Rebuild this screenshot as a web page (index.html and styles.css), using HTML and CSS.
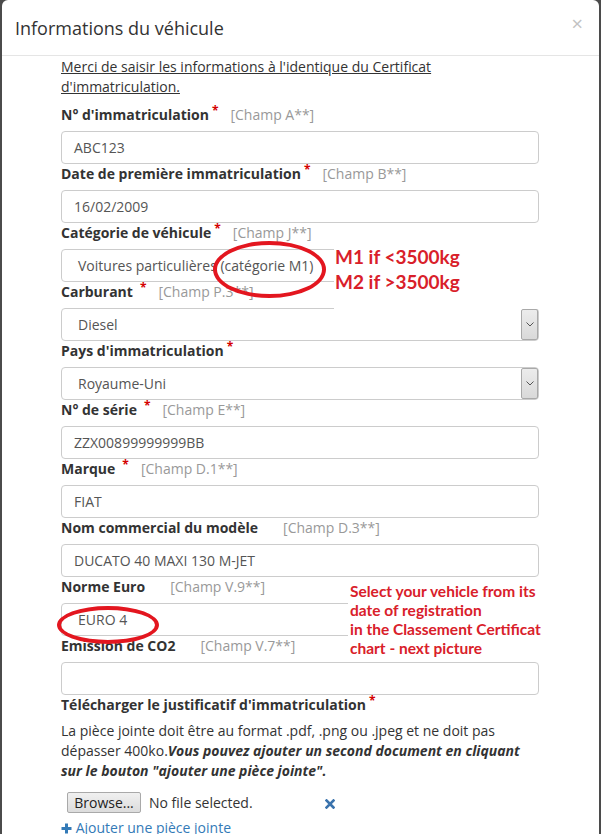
FILE: index.html
```html
<!DOCTYPE html>
<html lang="fr">
<head>
<meta charset="utf-8">
<title>Informations du véhicule</title>
<link rel="stylesheet" href="styles.css">
</head>
<body>
<div class="modal">
  <div class="modal-header">
    <h4 class="modal-title">Informations du véhicule</h4>
    <span class="close">×</span>
  </div>
  <div class="modal-body">
    <p class="intro">Merci de saisir les informations à l'identique du Certificat<br>d'immatriculation.</p>

    <div class="field">
      <div class="label"><b>N° d'immatriculation</b><span class="req">*</span><span class="champ">[Champ A**]</span></div>
      <div class="input">ABC123</div>
    </div>
    <div class="field">
      <div class="label"><b>Date de première immatriculation</b><span class="req">*</span><span class="champ">[Champ B**]</span></div>
      <div class="input">16/02/2009</div>
    </div>
    <div class="field">
      <div class="label"><b>Catégorie de véhicule</b><span class="req">*</span><span class="champ">[Champ J**]</span></div>
      <div class="select"><span class="select-value">Voitures particulières (catégorie M1)</span><span class="select-arrow"><svg width="8" height="5" viewBox="0 0 8 5"><path d="M0.5 0.5 L4 4 L7.5 0.5" fill="none" stroke="#555" stroke-width="1"/></svg></span></div>
    </div>
    <div class="field">
      <div class="label"><b>Carburant</b><span class="req req-spaced">*</span><span class="champ">[Champ P.3**]</span></div>
      <div class="select"><span class="select-value">Diesel</span><span class="select-arrow"><svg width="8" height="5" viewBox="0 0 8 5"><path d="M0.5 0.5 L4 4 L7.5 0.5" fill="none" stroke="#555" stroke-width="1"/></svg></span></div>
    </div>
    <div class="field">
      <div class="label"><b>Pays d'immatriculation</b><span class="req">*</span></div>
      <div class="select"><span class="select-value">Royaume-Uni</span><span class="select-arrow"><svg width="8" height="5" viewBox="0 0 8 5"><path d="M0.5 0.5 L4 4 L7.5 0.5" fill="none" stroke="#555" stroke-width="1"/></svg></span></div>
    </div>
    <div class="field">
      <div class="label"><b>N° de série</b><span class="req req-spaced">*</span><span class="champ">[Champ E**]</span></div>
      <div class="input">ZZX00899999999BB</div>
    </div>
    <div class="field">
      <div class="label"><b>Marque</b><span class="req req-spaced">*</span><span class="champ">[Champ D.1**]</span></div>
      <div class="input">FIAT</div>
    </div>
    <div class="field">
      <div class="label"><b>Nom commercial du modèle</b><span class="champ champ-solo">[Champ D.3**]</span></div>
      <div class="input">DUCATO 40 MAXI 130 M-JET</div>
    </div>
    <div class="field">
      <div class="label"><b>Norme Euro</b><span class="champ champ-solo">[Champ V.9**]</span></div>
      <div class="select"><span class="select-value">EURO 4</span><span class="select-arrow"><svg width="8" height="5" viewBox="0 0 8 5"><path d="M0.5 0.5 L4 4 L7.5 0.5" fill="none" stroke="#555" stroke-width="1"/></svg></span></div>
    </div>
    <div class="field">
      <div class="label"><b>Emission de CO2</b><span class="champ champ-solo">[Champ V.7**]</span></div>
      <div class="input"></div>
    </div>

    <div class="label"><b>Télécharger le justificatif d'immatriculation</b><span class="req">*</span></div>
    <p class="help">La pièce jointe doit être au format .pdf, .png ou .jpeg et ne doit pas<br>dépasser 400ko.<em>Vous pouvez ajouter un second document en cliquant<br>sur le bouton "ajouter une pièce jointe".</em></p>
    <div class="file-row">
      <span class="browse">Browse...</span>
      <span class="file-name">No file selected.</span>
      <svg class="remove" width="10" height="10" viewBox="0 0 10 10"><path d="M1.5 1.5 L8.5 8.5 M8.5 1.5 L1.5 8.5" stroke="#3b73ad" stroke-width="2.6" stroke-linecap="square"/></svg>
    </div>
    <div class="add-link"><svg width="11" height="11" viewBox="0 0 11 11"><path d="M5.5 0.5 V10.5 M0.5 5.5 H10.5" stroke="#337ab7" stroke-width="3"/></svg> Ajouter une pièce jointe</div>
  </div>

  <div class="note note-cat">M1 if &lt;3500kg<br>M2 if &gt;3500kg</div>
  <div class="ring ring-cat"></div>
  <div class="note note-euro">Select your vehicle from its<br>date of registration<br>in the Classement Certificat<br>chart - next picture</div>
  <div class="ring ring-euro"></div>
</div>
</body>
</html>
```

FILE: styles.css
```css
* { box-sizing: border-box; }
html, body { margin: 0; height: 100%; overflow: hidden; }
body {
  background: #4b4b4b;
  font-family: "Open Sans", sans-serif;
  font-size: 14px;
  color: #333;
}
.modal {
  position: relative;
  margin: 0 2px 0 2px;
  height: 834px;
  background: #fff;
  border-radius: 6px 6px 0 0;
}
.modal-header {
  display: flex;
  justify-content: space-between;
  align-items: center;
  height: 56px;
  padding: 0 16px 0 13px;
  border-bottom: 1px solid #e5e5e5;
}
.modal-title {
  margin: 0;
  font-size: 18px;
  font-weight: 400;
  line-height: 26px;
  color: #333;
}
.close {
  font-size: 20px;
  line-height: 1;
  color: #c2c2c2;
  margin-top: -8px;
}
.modal-body { padding: 1px 60px 0 59px; }
.intro {
  margin: 0 0 8px;
  line-height: 20px;
  text-decoration: underline;
}
.field { margin: 0; }
.label {
  height: 20px;
  line-height: 20px;
  margin-bottom: 6px;
  white-space: nowrap;
  overflow: visible;
}
.label b { font-weight: 700; }
.req {
  color: #d40000;
  font-size: 12px;
  line-height: 0;
  font-weight: 700;
  position: relative;
  top: -5px;
  margin-left: 3px;
}
.req-spaced { margin-left: 7px; }
.champ { color: #999; margin-left: 12px; }
.champ-solo { margin-left: 25px; }
.input {
  height: 33px;
  border: 1px solid #ccc;
  border-radius: 4px;
  padding: 0 12px;
  line-height: 31px;
  color: #555;
}
.select {
  display: flex;
  height: 33px;
  border: 1px solid #ccc;
  border-radius: 4px;
  color: #555;
}
.select-value {
  flex: 1;
  padding-left: 16px;
  line-height: 31px;
}
.select-arrow {
  width: 17px;
  display: flex;
  align-items: center;
  justify-content: center;
  border: 1px solid #a9a9a9;
  border-radius: 2px;
  background: linear-gradient(#ececec, #d9d9d9);
}
.help {
  margin: 0 0 10px;
  line-height: 20px;
}
.help em { font-weight: 700; }
.file-row {
  display: flex;
  align-items: center;
  height: 22px;
  margin-left: 6px;
}
.browse {
  display: inline-block;
  width: 74px;
  height: 21px;
  line-height: 19px;
  text-align: center;
  border: 1px solid #a9a9a9;
  border-radius: 2px;
  background: linear-gradient(#f0f0f0, #dcdcdc);
  color: #222;
}
.file-name {
  width: 176px;
  margin-left: 8px;
  color: #333;
}
.remove { margin-top: 4px; }
.add-link {
  margin-top: 5px;
  line-height: 20px;
  color: #337ab7;
}
.add-link svg { vertical-align: -1px; }

.note {
  position: absolute;
  background: #fff;
  color: #d9202a;
  font-family: Lato, "Open Sans", sans-serif;
  font-weight: 700;
}
.note-cat {
  left: 332px;
  top: 242px;
  width: 213px;
  height: 67px;
  padding: 2px 0 0 1px;
  font-size: 19px;
  line-height: 25px;
}
.note-euro {
  left: 346px;
  top: 582px;
  width: 200px;
  height: 78px;
  padding: 0 0 0 2px;
  font-size: 15.5px;
  line-height: 19px;
}
.ring {
  position: absolute;
  border: 4px solid #e3161f;
  border-radius: 50%;
}
.ring-cat { left: 211px; top: 241px; width: 113px; height: 57px; }
.ring-euro { left: 55px; top: 606px; width: 102px; height: 38px; }
```
